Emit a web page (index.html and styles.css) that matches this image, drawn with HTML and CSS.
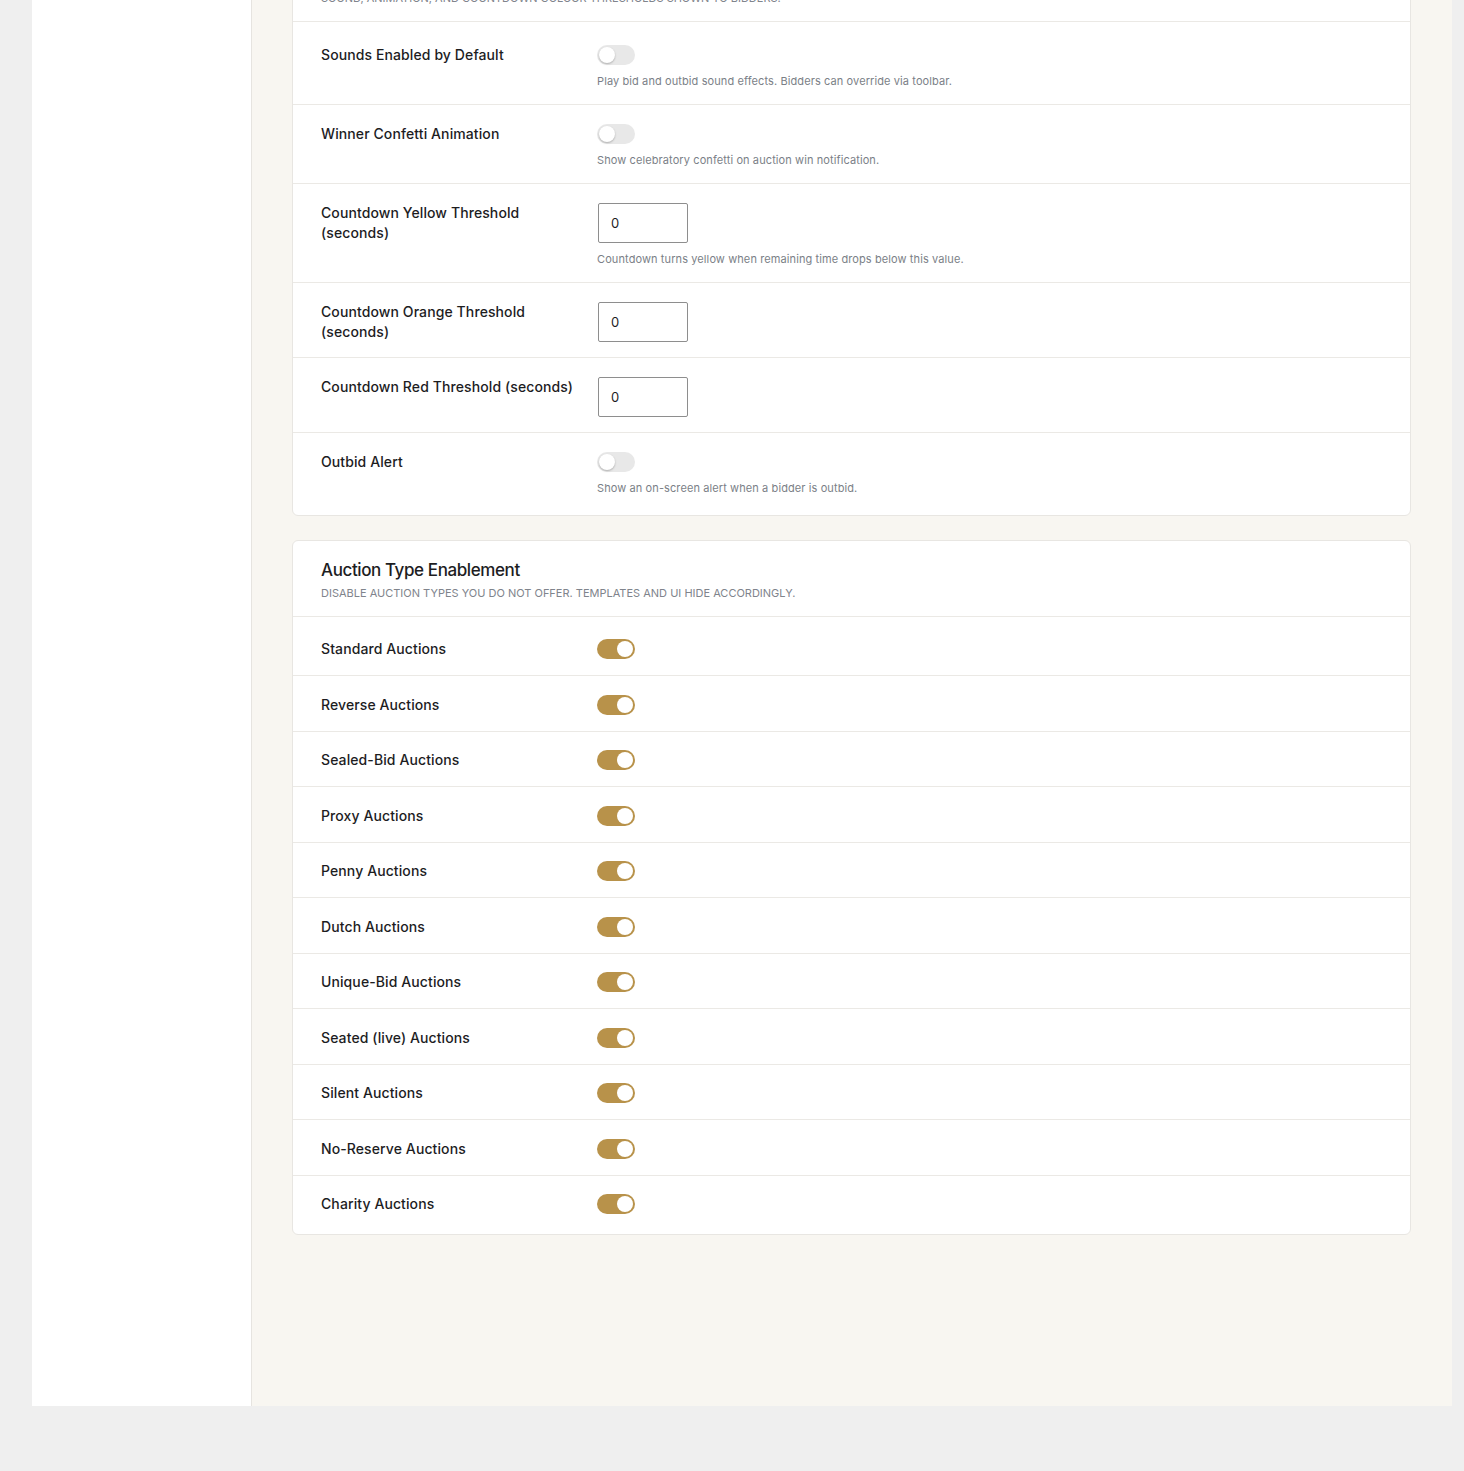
FILE: index.html
```html
<!DOCTYPE html>
<html lang="en">
<head>
    <meta charset="UTF-8">
    <meta name="viewport" content="width=device-width, initial-scale=1.0">
    <title>Auction Settings</title>
    <link rel="stylesheet" href="styles.css">
</head>
<body>
    <div class="app">
        <aside class="sidebar"></aside>

        <main class="main">
            <section class="card card-clipped">
                <div class="card-header">
                    <h2 class="card-title">Bidder Experience</h2>
                    <div class="card-subtitle">Sound, animation, and countdown colour thresholds shown to bidders.</div>
                </div>
                <div class="card-body">
                    <div class="setting-row">
                        <div class="setting-label">Sounds Enabled by Default</div>
                        <div class="setting-control">
                            <label class="switch"><input type="checkbox"><span class="slider"></span></label>
                            <div class="setting-help">Play bid and outbid sound effects. Bidders can override via toolbar.</div>
                        </div>
                    </div>
                    <div class="setting-row">
                        <div class="setting-label">Winner Confetti Animation</div>
                        <div class="setting-control">
                            <label class="switch"><input type="checkbox"><span class="slider"></span></label>
                            <div class="setting-help">Show celebratory confetti on auction win notification.</div>
                        </div>
                    </div>
                    <div class="setting-row">
                        <div class="setting-label">Countdown Yellow Threshold (seconds)</div>
                        <div class="setting-control">
                            <input type="number" class="number-input" value="0">
                            <div class="setting-help">Countdown turns yellow when remaining time drops below this value.</div>
                        </div>
                    </div>
                    <div class="setting-row">
                        <div class="setting-label">Countdown Orange Threshold (seconds)</div>
                        <div class="setting-control">
                            <input type="number" class="number-input" value="0">
                        </div>
                    </div>
                    <div class="setting-row">
                        <div class="setting-label">Countdown Red Threshold (seconds)</div>
                        <div class="setting-control">
                            <input type="number" class="number-input" value="0">
                        </div>
                    </div>
                    <div class="setting-row">
                        <div class="setting-label">Outbid Alert</div>
                        <div class="setting-control">
                            <label class="switch"><input type="checkbox"><span class="slider"></span></label>
                            <div class="setting-help">Show an on-screen alert when a bidder is outbid.</div>
                        </div>
                    </div>
                </div>
            </section>

            <section class="card">
                <div class="card-header">
                    <h2 class="card-title">Auction Type Enablement</h2>
                    <div class="card-subtitle">Disable auction types you do not offer. Templates and UI hide accordingly.</div>
                </div>
                <div class="card-body">
                    <div class="setting-row compact">
                        <div class="setting-label">Standard Auctions</div>
                        <label class="switch"><input type="checkbox" checked><span class="slider"></span></label>
                    </div>
                    <div class="setting-row compact">
                        <div class="setting-label">Reverse Auctions</div>
                        <label class="switch"><input type="checkbox" checked><span class="slider"></span></label>
                    </div>
                    <div class="setting-row compact">
                        <div class="setting-label">Sealed-Bid Auctions</div>
                        <label class="switch"><input type="checkbox" checked><span class="slider"></span></label>
                    </div>
                    <div class="setting-row compact">
                        <div class="setting-label">Proxy Auctions</div>
                        <label class="switch"><input type="checkbox" checked><span class="slider"></span></label>
                    </div>
                    <div class="setting-row compact">
                        <div class="setting-label">Penny Auctions</div>
                        <label class="switch"><input type="checkbox" checked><span class="slider"></span></label>
                    </div>
                    <div class="setting-row compact">
                        <div class="setting-label">Dutch Auctions</div>
                        <label class="switch"><input type="checkbox" checked><span class="slider"></span></label>
                    </div>
                    <div class="setting-row compact">
                        <div class="setting-label">Unique-Bid Auctions</div>
                        <label class="switch"><input type="checkbox" checked><span class="slider"></span></label>
                    </div>
                    <div class="setting-row compact">
                        <div class="setting-label">Seated (live) Auctions</div>
                        <label class="switch"><input type="checkbox" checked><span class="slider"></span></label>
                    </div>
                    <div class="setting-row compact">
                        <div class="setting-label">Silent Auctions</div>
                        <label class="switch"><input type="checkbox" checked><span class="slider"></span></label>
                    </div>
                    <div class="setting-row compact">
                        <div class="setting-label">No-Reserve Auctions</div>
                        <label class="switch"><input type="checkbox" checked><span class="slider"></span></label>
                    </div>
                    <div class="setting-row compact">
                        <div class="setting-label">Charity Auctions</div>
                        <label class="switch"><input type="checkbox" checked><span class="slider"></span></label>
                    </div>
                </div>
            </section>
        </main>
    </div>
</body>
</html>
```

FILE: styles.css
```css
* {
    margin: 0;
    padding: 0;
    box-sizing: border-box;
}

body {
    font-family: 'Inter', 'Noto Sans', sans-serif;
    background-color: #efefef;
    color: #1d1d1f;
}

.app {
    display: flex;
    margin: -95px 12px 0 32px;
    height: 1501px;
}

.sidebar {
    width: 220px;
    flex-shrink: 0;
    background-color: #ffffff;
    border-right: 1px solid #e6e4e0;
}

.main {
    flex: 1;
    background-color: #f8f6f1;
    padding: 40px 41px 40px 40px;
    display: flex;
    flex-direction: column;
    gap: 24px;
}

.card {
    background-color: #ffffff;
    border: 1px solid #e8e6e2;
    border-radius: 6px;
}

.card-header {
    padding: 18px 28px 15px;
    border-bottom: 1px solid #ebe9e5;
}

.card-title {
    font-size: 17px;
    font-weight: 500;
    line-height: 22px;
    letter-spacing: -0.4px;
    color: #1d1d1f;
}

.card-subtitle {
    margin-top: 4px;
    font-size: 11px;
    line-height: 16px;
    text-transform: uppercase;
    color: #80848c;
}

.card-body {
    padding: 4px 0;
}

.setting-row {
    display: flex;
    align-items: flex-start;
    padding: 19px 28px 15px;
    border-top: 1px solid #ebe9e5;
}

.setting-row:first-child {
    border-top: none;
}

.setting-row.compact {
    align-items: center;
    padding: 18.3px 28px 16.2px;
}

.setting-label {
    width: 276px;
    flex-shrink: 0;
    padding-right: 20px;
    font-size: 14px;
    font-weight: 500;
    line-height: 20px;
    letter-spacing: 0.1px;
    color: #1d1d1f;
}

.setting-control {
    display: flex;
    flex-direction: column;
    align-items: flex-start;
}

.setting-help {
    margin-top: 8px;
    font-size: 11px;
    line-height: 16px;
    letter-spacing: 0.1px;
    color: #7b7f87;
}

.switch {
    position: relative;
    display: inline-block;
    width: 38px;
    height: 20px;
    cursor: pointer;
}

.switch input {
    display: none;
}

.slider {
    position: absolute;
    inset: 0;
    background-color: #e8e8e8;
    border-radius: 10px;
    transition: background-color 0.2s ease;
}

.slider::before {
    content: '';
    position: absolute;
    left: 2px;
    top: 2px;
    width: 16px;
    height: 16px;
    border-radius: 50%;
    background-color: #ffffff;
    box-shadow: 0 1px 2px rgba(0, 0, 0, 0.25);
    transition: transform 0.2s ease;
}

.switch input:checked + .slider {
    background-color: #b8924a;
}

.switch input:checked + .slider::before {
    transform: translateX(18px);
    box-shadow: none;
}

.number-input {
    width: 90px;
    height: 40px;
    margin-left: 1px;
    padding: 0 12px;
    border: 1px solid #8e8e8e;
    border-radius: 2px;
    font-family: inherit;
    font-size: 13px;
    color: #1d1d1f;
    background-color: #ffffff;
    outline: none;
    -moz-appearance: textfield;
}

.number-input::-webkit-inner-spin-button,
.number-input::-webkit-outer-spin-button {
    -webkit-appearance: none;
    margin: 0;
}
```
